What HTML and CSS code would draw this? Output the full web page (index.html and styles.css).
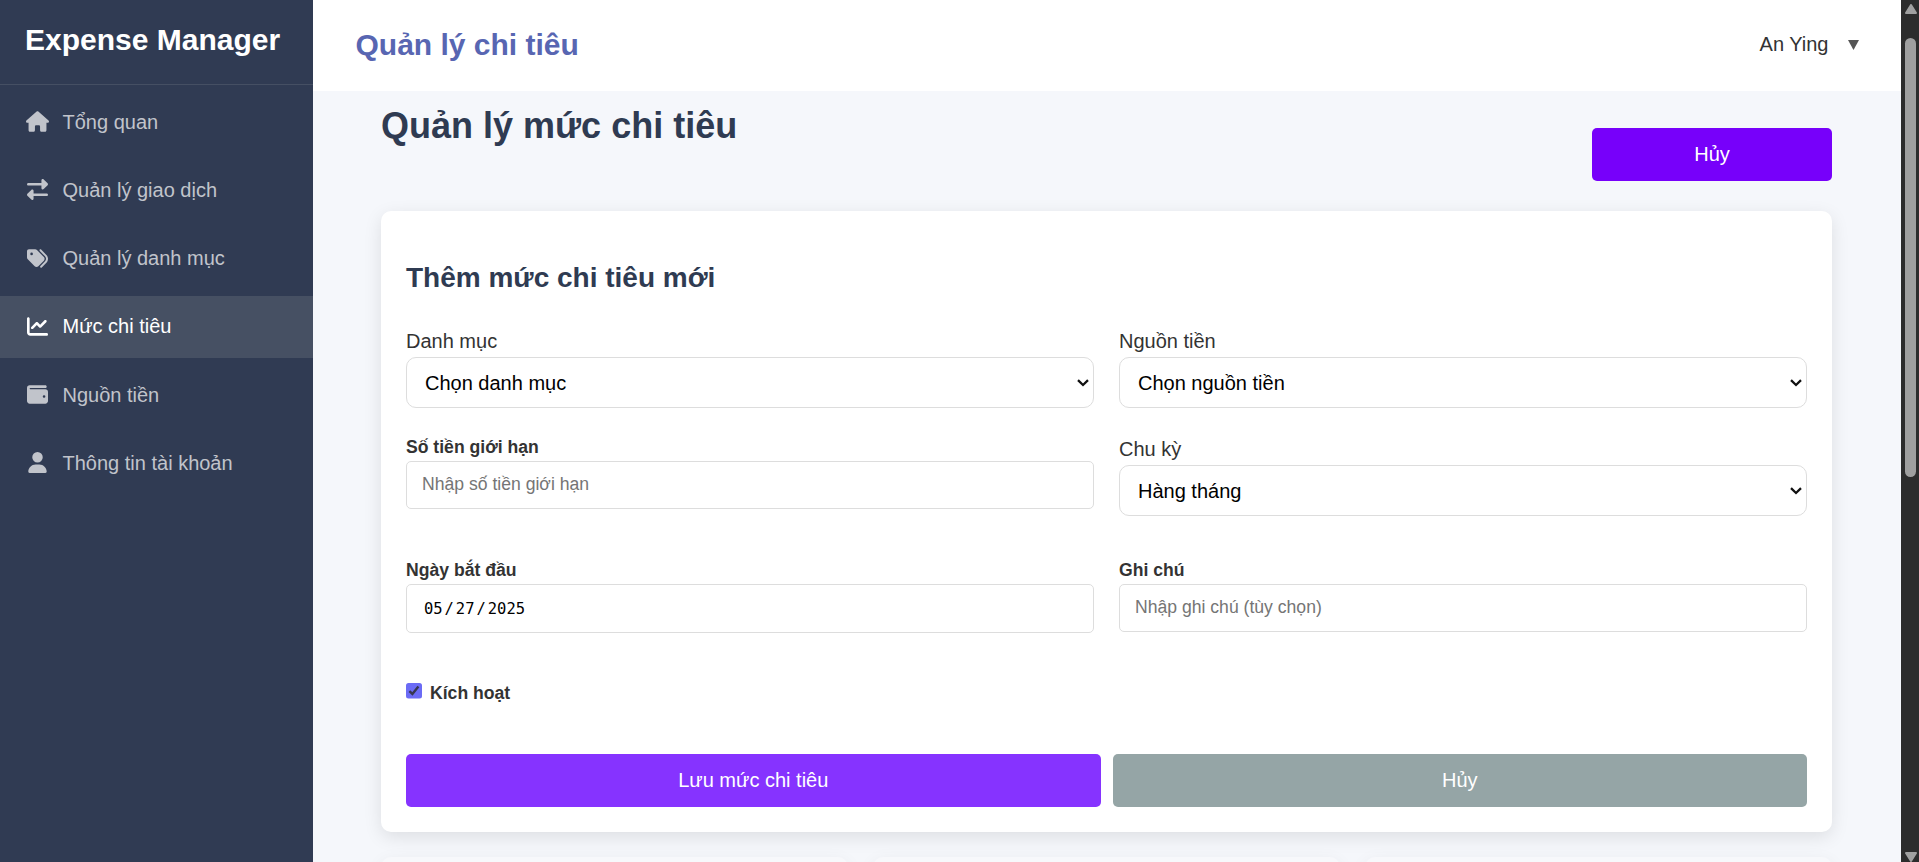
FILE: index.html
```html
<!DOCTYPE html>
<html lang="vi">
<head>
<meta charset="utf-8">
<title>Quản lý chi tiêu</title>
<link rel="stylesheet" href="styles.css">
</head>
<body>
<div class="app">
  <aside class="sidebar">
    <div class="brand">Expense Manager</div>
    <nav class="nav">
      <a class="nav-item"><svg class="icon icon-home" viewBox="0 0 576 512"><path d="M575.8 255.5c0 18-15 32.1-32 32.1h-32l.7 160.2c0 2.7-.2 5.4-.5 8.1V472c0 22.1-17.9 40-40 40H456c-1.1 0-2.2 0-3.3-.1c-1.4 .1-2.8 .1-4.2 .1H416 392c-22.1 0-40-17.9-40-40V448 384c0-17.7-14.3-32-32-32H256c-17.7 0-32 14.3-32 32v64 24c0 22.1-17.9 40-40 40H160 128.1c-1.5 0-3-.1-4.5-.2c-1.2 .1-2.4 .2-3.6 .2H104c-22.1 0-40-17.9-40-40V360c0-.9 0-1.9 .1-2.8V287.6H32c-18 0-32-14-32-32.1c0-9 3-17 10-24L266.4 8c7-7 15-8 22-8s15 2 21 7L564.8 231.5c8 7 12 15 11 24z"/></svg><span>Tổng quan</span></a>
      <a class="nav-item"><svg class="icon" viewBox="0 0 512 512"><path d="M32 96l320 0V32c0-12.9 7.8-24.6 19.8-29.6s25.7-2.2 34.9 6.9l96 96c6 6 9.4 14.1 9.4 22.6s-3.4 16.6-9.4 22.6l-96 96c-9.2 9.2-22.9 11.9-34.9 6.9s-19.8-16.6-19.8-29.6V160L32 160c-17.7 0-32-14.3-32-32s14.3-32 32-32zM480 352c17.7 0 32 14.3 32 32s-14.3 32-32 32H160v64c0 12.9-7.8 24.6-19.8 29.6s-25.7 2.2-34.9-6.9l-96-96c-6-6-9.4-14.1-9.4-22.6s3.4-16.6 9.4-22.6l96-96c9.2-9.2 22.9-11.9 34.9-6.9s19.8 16.6 19.8 29.6l0 64H480z"/></svg><span>Quản lý giao dịch</span></a>
      <a class="nav-item"><svg class="icon" viewBox="0 0 512 512"><path d="M345 39.1L472.8 168.4c52.4 53 52.4 138.2 0 191.2L360.8 472.9c-9.3 9.4-24.5 9.5-33.9 .2s-9.5-24.5-.2-33.9L438.6 325.9c33.9-34.3 33.9-89.4 0-123.7L310.9 72.9c-9.3-9.4-9.2-24.6 .2-33.9s24.6-9.2 33.9 .2zM0 229.5V80C0 53.5 21.5 32 48 32H197.5c17 0 33.3 6.7 45.3 18.7l168 168c25 25 25 65.5 0 90.5L277.3 442.7c-25 25-65.5 25-90.5 0l-168-168C6.7 262.7 0 246.5 0 229.5zM144 144a32 32 0 1 0 -64 0 32 32 0 1 0 64 0z"/></svg><span>Quản lý danh mục</span></a>
      <a class="nav-item active"><svg class="icon" viewBox="0 0 512 512"><path d="M64 64c0-17.7-14.3-32-32-32S0 46.3 0 64V400c0 44.2 35.8 80 80 80H480c17.7 0 32-14.3 32-32s-14.3-32-32-32H80c-8.8 0-16-7.2-16-16V64zm406.6 86.6c12.5-12.5 12.5-32.8 0-45.3s-32.8-12.5-45.3 0L320 210.7l-57.4-57.4c-12.5-12.5-32.8-12.5-45.3 0l-112 112c-12.5 12.5-12.5 32.8 0 45.3s32.8 12.5 45.3 0L240 221.3l57.4 57.4c12.5 12.5 32.8 12.5 45.3 0l128-128z"/></svg><span>Mức chi tiêu</span></a>
      <a class="nav-item"><svg class="icon" viewBox="0 0 512 512"><path d="M64 32C28.7 32 0 60.7 0 96V416c0 35.3 28.7 64 64 64H448c35.3 0 64-28.7 64-64V192c0-35.3-28.7-64-64-64H80c-8.8 0-16-7.2-16-16s7.2-16 16-16H448c17.7 0 32-14.3 32-32s-14.3-32-32-32H64zM416 272a32 32 0 1 1 0 64 32 32 0 1 1 0-64z"/></svg><span>Nguồn tiền</span></a>
      <a class="nav-item"><svg class="icon" viewBox="-32 0 512 512"><path d="M224 256A128 128 0 1 0 224 0a128 128 0 1 0 0 256zm-45.7 48C79.8 304 0 383.8 0 482.3C0 498.7 13.3 512 29.7 512H418.3c16.4 0 29.7-13.3 29.7-29.7C448 383.8 368.2 304 269.7 304H178.3z"/></svg><span>Thông tin tài khoản</span></a>
    </nav>
  </aside>

  <div class="main">
    <header class="topbar">
      <div class="topbar-title">Quản lý chi tiêu</div>
      <div class="user"><span>An Ying</span><svg class="caret" viewBox="0 0 11 10"><path d="M0 0h11L5.5 10z"/></svg></div>
    </header>

    <main class="content">
      <div class="page-head">
        <h1>Quản lý mức chi tiêu</h1>
        <button class="btn btn-toggle">Hủy</button>
      </div>

      <section class="card">
        <h2>Thêm mức chi tiêu mới</h2>
        <form class="form">
          <div class="field">
            <label>Danh mục</label>
            <div class="select-wrap"><select><option>Chọn danh mục</option></select><svg class="chevron" viewBox="0 0 12 8"><path d="M1 1.2 6 6 11 1.2"/></svg></div>
          </div>
          <div class="field">
            <label>Nguồn tiền</label>
            <div class="select-wrap"><select><option>Chọn nguồn tiền</option></select><svg class="chevron" viewBox="0 0 12 8"><path d="M1 1.2 6 6 11 1.2"/></svg></div>
          </div>
          <div class="group">
            <label>Số tiền giới hạn</label>
            <input class="input" type="text" placeholder="Nhập số tiền giới hạn">
          </div>
          <div class="field">
            <label>Chu kỳ</label>
            <div class="select-wrap"><select><option>Hàng tháng</option></select><svg class="chevron" viewBox="0 0 12 8"><path d="M1 1.2 6 6 11 1.2"/></svg></div>
          </div>
          <div class="group">
            <label>Ngày bắt đầu</label>
            <div class="input date"><span>05</span><i>/</i><span>27</span><i>/</i><span>2025</span></div>
          </div>
          <div class="group">
            <label>Ghi chú</label>
            <input class="input" type="text" placeholder="Nhập ghi chú (tùy chọn)">
          </div>
          <div class="group">
            <label class="check"><svg class="checkbox" viewBox="0 0 16 16"><rect class="box" width="16" height="15.5" rx="2.5"/><path class="tick" d="M3.4 8.2 6.4 11 12.4 3.6"/></svg>Kích hoạt</label>
          </div>
        </form>
        <div class="actions">
          <button class="btn btn-save">Lưu mức chi tiêu</button>
          <button class="btn btn-cancel">Hủy</button>
        </div>
      </section>

      <div class="stats">
        <div class="stat"></div>
        <div class="stat"></div>
        <div class="stat"></div>
      </div>
    </main>
  </div>

  <div class="scrollbar">
    <svg class="arrow" viewBox="0 0 12 10"><path d="M6 1 11 9H1z"/></svg>
    <div class="thumb"></div>
    <svg class="arrow arrow-down" viewBox="0 0 12 10"><path d="M6 9 1 1h10z"/></svg>
  </div>
</div>
</body>
</html>
```
FILE: styles.css
```css
* { box-sizing: border-box; }

body {
  margin: 0;
  font-family: "Liberation Sans", Arial, sans-serif;
  font-size: 20px;
  line-height: 1.6;
  color: #333;
  background: #f5f7fb;
}

.app { display: flex; height: 862px; overflow: hidden; }

.sidebar { flex: 0 0 313px; background: #303b53; color: #fff; }
.brand {
  height: 85px;
  padding: 16px 25px 0;
  border-bottom: 1px solid #454f63;
  font-size: 30px;
  font-weight: bold;
  white-space: nowrap;
}
.nav { display: flex; flex-direction: column; gap: 6.25px; padding-top: 6px; }
.nav-item {
  display: flex;
  align-items: center;
  gap: 12.5px;
  height: 62px;
  padding: 0 25px 1px;
  color: #c1c4cb;
}
.nav-item.active { background: #465063; color: #fff; }
.icon { flex: none; width: 21px; height: 21px; margin: 0 2px; fill: currentColor; }
.icon-home { width: 23px; margin: 0 1px; }

.main { flex: 1; min-width: 0; display: flex; flex-direction: column; }
.topbar {
  flex: 0 0 91px;
  display: flex;
  align-items: center;
  justify-content: space-between;
  padding: 0 42.5px 2px;
  background: #fff;
}
.topbar-title { font-size: 30px; font-weight: bold; color: #5866b2; }
.user { display: flex; align-items: center; gap: 19px; }
.user span { margin-top: -2px; }
.caret { width: 11px; height: 10px; fill: #555; }

.content { flex: 1; min-height: 0; padding: 0 69px 0 68px; }
.page-head { display: flex; justify-content: space-between; height: 120px; }
h1 { margin: 6px 0 0; font-size: 36px; line-height: 57px; color: #2f3b52; }

.btn {
  height: 53px;
  border: 0;
  border-radius: 5px;
  font: 20px "Liberation Sans", Arial, sans-serif;
  color: #fff;
}
.btn-toggle { width: 240px; margin-top: 37.4px; background: #7700fa; }

.card {
  height: 621px;
  padding: 25px;
  border-radius: 10px;
  background: #fff;
  box-shadow: 0 5px 18px rgba(0, 0, 0, .1);
}
h2 { height: 89px; margin: 0; padding-top: 19px; font-size: 28px; line-height: 45px; color: #2f3b52; }

.form { display: grid; grid-template-columns: 1fr 1fr; column-gap: 25px; row-gap: 25px; }
.field label { display: block; height: 32px; line-height: 32px; }
.select-wrap { display: grid; align-items: center; }
.select-wrap > * { grid-area: 1 / 1; }
select {
  appearance: none;
  width: 100%;
  height: 51px;
  padding: 0 18px;
  border: 1px solid #ddd;
  border-radius: 10px;
  background: #fff;
  font: 20px "Liberation Sans", Arial, sans-serif;
  color: #000;
}
.chevron {
  justify-self: end;
  width: 12px;
  height: 8px;
  margin-right: 5px;
  fill: none;
  stroke: #111;
  stroke-width: 2.3;
}

.group { margin-bottom: 22px; font-size: 17.6px; }
.group label { display: block; height: 28px; line-height: 28px; font-weight: bold; }
.input {
  display: block;
  width: 100%;
  height: 48px;
  padding: 0 15px 1px;
  border: 1px solid #ddd;
  border-radius: 5px;
  background: #fff;
  font: 17.6px "Liberation Sans", Arial, sans-serif;
}
.input::placeholder { color: #757575; opacity: 1; }
.date {
  display: flex;
  align-items: center;
  height: 49px;
  padding: 0 17px;
  font: 15.5px "DejaVu Sans Mono", monospace;
  color: #000;
}
.date i { width: 13.2px; text-align: center; font-style: normal; }

.group .check { display: flex; align-items: center; gap: 8px; margin-top: -1px; }
.checkbox { width: 16px; height: 16px; margin-top: -4px; }
.box { fill: #6b6bf5; }
.tick { fill: none; stroke: #363650; stroke-width: 2.4; }

.actions { display: flex; gap: 12px; margin-top: 25px; }
.actions .btn { flex: 1; }
.btn-save { background: #8633ff; }
.btn-cancel { background: #95a5a6; }

.stats { display: grid; grid-template-columns: repeat(3, 1fr); gap: 25px; margin-top: 25px; }
.stat { height: 120px; border-radius: 10px; background: #f7f8fb; box-shadow: 0 5px 18px rgba(0, 0, 0, .07); }

.scrollbar {
  flex: 0 0 18px;
  display: flex;
  flex-direction: column;
  align-items: center;
  padding: 4px 0 0 1px;
  background: #2c2c2c;
}
.arrow { width: 12px; height: 10px; fill: #a0a0a0; stroke: #a0a0a0; stroke-width: 2; stroke-linejoin: round; }
.thumb { width: 11px; height: 439px; margin-top: 24px; border-radius: 6px; background: #9f9f9f; }
.arrow-down { margin-top: auto; }
```
